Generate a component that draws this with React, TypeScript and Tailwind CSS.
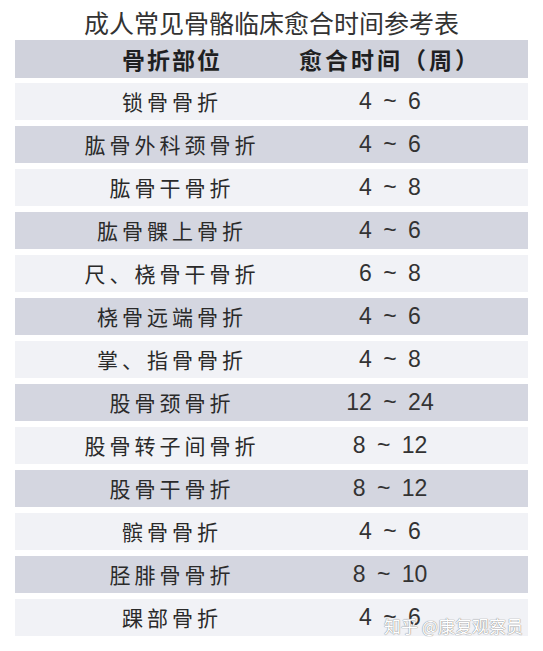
const rows: [string, string][] = [
  ['锁骨骨折', '4 ~ 6'],
  ['肱骨外科颈骨折', '4 ~ 6'],
  ['肱骨干骨折', '4 ~ 8'],
  ['肱骨髁上骨折', '4 ~ 6'],
  ['尺、桡骨干骨折', '6 ~ 8'],
  ['桡骨远端骨折', '4 ~ 6'],
  ['掌、指骨骨折', '4 ~ 8'],
  ['股骨颈骨折', '12 ~ 24'],
  ['股骨转子间骨折', '8 ~ 12'],
  ['股骨干骨折', '8 ~ 12'],
  ['髌骨骨折', '4 ~ 6'],
  ['胫腓骨骨折', '8 ~ 10'],
  ['踝部骨折', '4 ~ 6'],
]

const cjk = "font-['Noto_Sans_CJK_SC',sans-serif]"

export default function App() {
  return (
    <div className="relative w-[543px] h-[651px] bg-white overflow-hidden">
      {/* Title */}
      <h1 className={`${cjk} pt-[6px] text-center text-[25px] leading-[32px] text-[#333]`}>
        成人常见骨骼临床愈合时间参考表
      </h1>

      {/* Table */}
      <div className="mx-[15px] mt-[2px] flex flex-col gap-[5px]">
        <div className="flex h-[38px] items-center bg-[#d0d2dc] text-[#1f1f22]">
          <div className={`${cjk} w-[314px] text-center text-[23px] font-bold tracking-[2px]`}>骨折部位</div>
          <div className="flex w-[122px] justify-center">
            <span className={`${cjk} text-[23px] font-bold tracking-[3px] whitespace-nowrap`}>愈合时间（周）</span>
          </div>
        </div>
        <div className="flex flex-col gap-[6px]">
          {rows.map(([part, weeks], i) => (
            <div
              key={part}
              className={`flex h-[37px] items-center ${i % 2 === 1 ? 'bg-[#d4d6e0]' : 'bg-[#f1f2f6]'}`}
            >
              <div className={`${cjk} w-[314px] text-center text-[21px] tracking-[4px] text-[#2a2a2a]`}>{part}</div>
              <div className="w-[122px] text-center font-['Liberation_Sans',sans-serif] text-[23px] text-[#333] [word-spacing:5px]">
                {weeks}
              </div>
            </div>
          ))}
        </div>
      </div>

      {/* Watermark */}
      <div
        className={`${cjk} absolute left-[384px] top-[613px] text-[17px] text-white [text-shadow:0_0_1px_#8a8a8a,0_0_1px_#8a8a8a]`}
      >
        知乎 @康复观察员
      </div>
    </div>
  )
}
